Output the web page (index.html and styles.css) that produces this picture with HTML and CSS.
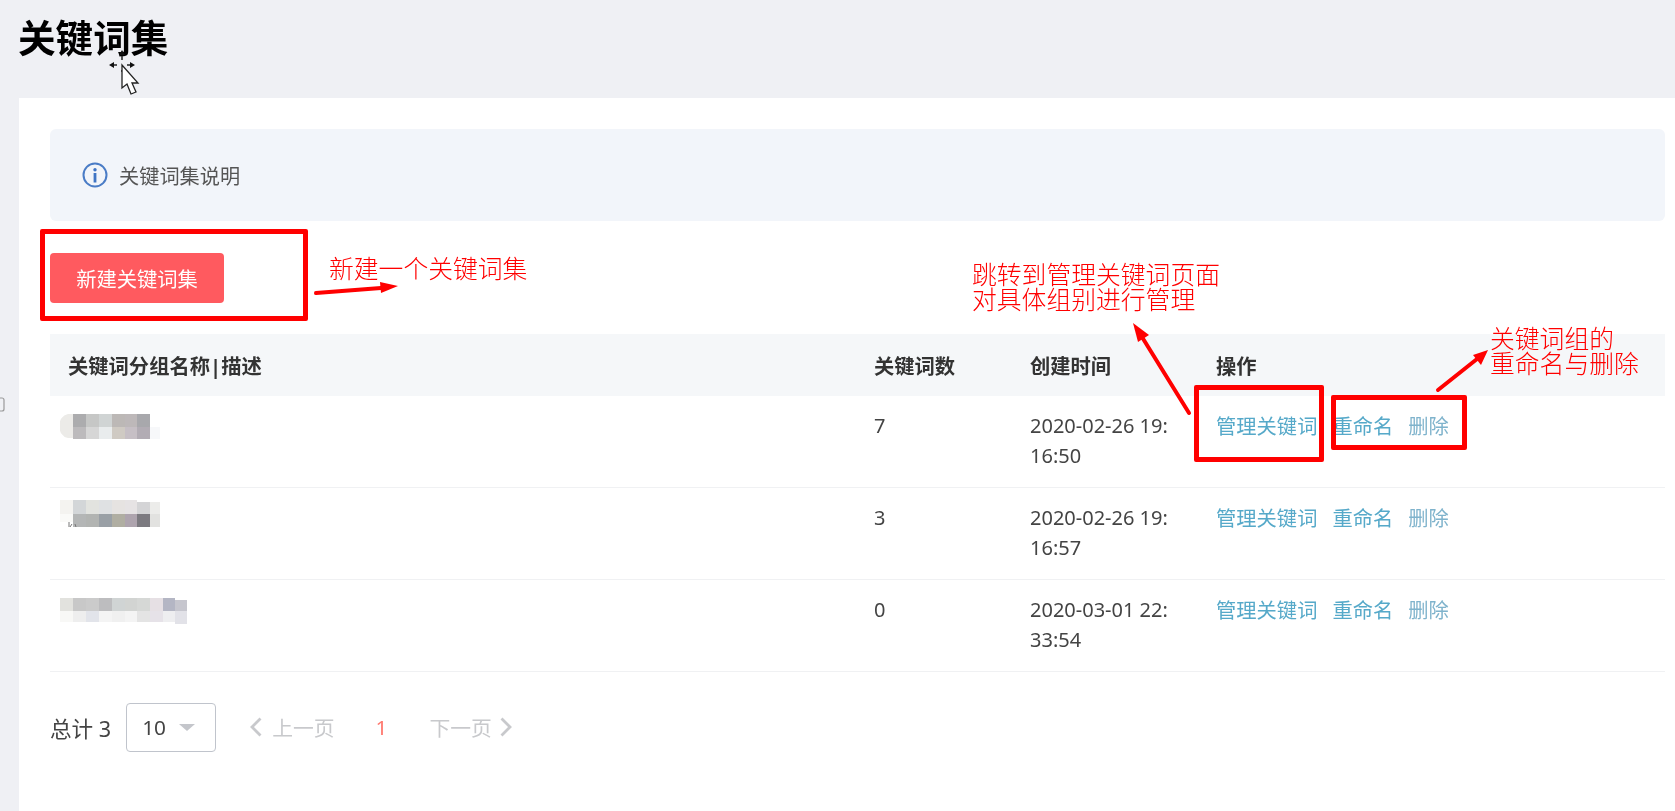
FILE: index.html
```html
<!DOCTYPE html>
<html lang="zh-CN">
  <head>
    <meta charset="UTF-8" />
    <title>关键词集</title>
    <link rel="stylesheet" href="styles.css">
  </head>
  <body>
    <header class="pageHead">
      <h1>关键词集</h1>
    </header>

    <main class="panel">
      <div class="notice">
        <svg class="noticeIcon" viewBox="0 0 26 26" width="26" height="26">
          <circle cx="13" cy="13" r="11.5" fill="none" stroke="#4a7cc6" stroke-width="2" />
          <circle cx="13" cy="7.8" r="1.7" fill="#3f74c4" />
          <rect x="11.6" y="11" width="2.8" height="9.5" fill="#3f74c4" />
        </svg>
        <span>关键词集说明</span>
      </div>

      <div class="toolbar">
        <button class="btnNew">新建关键词集</button>
      </div>

      <table class="groupTable">
        <thead>
          <tr>
            <th class="colName">关键词分组名称|描述</th>
            <th class="colCount">关键词数</th>
            <th class="colTime">创建时间</th>
            <th>操作</th>
          </tr>
        </thead>
        <tbody>
          <tr>
            <td>
              <svg class="mosaic" width="110" height="26" viewBox="0 0 110 26">
                <path d="M8 0h7v24H8a10 10 0 0 1-8-12 10 10 0 0 1 8-12z" fill="#ecebe8" />
                <rect x="13" y="0" width="13" height="13" fill="#acacae" />
                <rect x="26" y="0" width="13" height="13" fill="#c6c7c6" />
                <rect x="39" y="0" width="13" height="13" fill="#d0d4d4" />
                <rect x="52" y="0" width="13" height="13" fill="#bcb8b6" />
                <rect x="65" y="0" width="12" height="13" fill="#bdb8b9" />
                <rect x="77" y="0" width="13" height="13" fill="#a8a8ac" />
                <rect x="13" y="13" width="13" height="12" fill="#bcbabc" />
                <rect x="26" y="13" width="13" height="12" fill="#d6d6d6" />
                <rect x="39" y="13" width="13" height="12" fill="#e9eced" />
                <rect x="52" y="13" width="13" height="12" fill="#cfcac3" />
                <rect x="65" y="13" width="12" height="12" fill="#c6bfc5" />
                <rect x="77" y="13" width="13" height="12" fill="#b2acb4" />
                <rect x="90" y="13" width="10" height="12" fill="#f7f8fa" />
              </svg>
            </td>
            <td>7</td>
            <td>2020-02-26 19:<br>16:50</td>
            <td>
              <div class="actions">
                <a>管理关键词</a>
                <a>重命名</a>
                <a class="light">删除</a>
              </div>
            </td>
          </tr>
          <tr>
            <td>
              <svg class="mosaic mosaicUp" width="110" height="30" viewBox="0 0 110 30">
                <rect x="0" y="0" width="13" height="14" fill="#f4f3f0" />
                <rect x="13" y="0" width="13" height="14" fill="#d3d6d8" />
                <rect x="26" y="0" width="13" height="14" fill="#e2e3df" />
                <rect x="39" y="0" width="13" height="14" fill="#dfe1e3" />
                <rect x="52" y="0" width="13" height="14" fill="#e6e3e1" />
                <rect x="65" y="0" width="12" height="14" fill="#e6e3e4" />
                <rect x="77" y="2" width="13" height="12" fill="#d4d4d6" />
                <rect x="90" y="2" width="10" height="12" fill="#ececea" />
                <rect x="0" y="14" width="13" height="8" fill="#fafaf8" />
                <rect x="13" y="14" width="13" height="13" fill="#b4b6b6" />
                <rect x="26" y="14" width="13" height="13" fill="#b2b4b2" />
                <rect x="39" y="14" width="13" height="13" fill="#9aa0a6" />
                <rect x="52" y="14" width="13" height="13" fill="#b0aea2" />
                <rect x="65" y="14" width="12" height="13" fill="#aea4ae" />
                <rect x="77" y="14" width="13" height="13" fill="#7c7a80" />
                <rect x="90" y="14" width="10" height="13" fill="#e2e2e0" />
                <path d="M9 22v5M12 24l-2 3M15 24l1 3" stroke="#777" stroke-width="1" fill="none" />
              </svg>
            </td>
            <td>3</td>
            <td>2020-02-26 19:<br>16:57</td>
            <td>
              <div class="actions">
                <a>管理关键词</a>
                <a>重命名</a>
                <a class="light">删除</a>
              </div>
            </td>
          </tr>
          <tr>
            <td>
              <svg class="mosaic" width="130" height="26" viewBox="0 0 130 26">
                <rect x="0" y="0" width="13" height="13" fill="#e2e2de" />
                <rect x="13" y="0" width="13" height="13" fill="#c8c8c8" />
                <rect x="26" y="0" width="13" height="13" fill="#cbcbcb" />
                <rect x="39" y="0" width="13" height="13" fill="#bdbdbf" />
                <rect x="52" y="0" width="13" height="13" fill="#d0d4d4" />
                <rect x="65" y="0" width="12" height="13" fill="#d2d4d2" />
                <rect x="77" y="0" width="13" height="13" fill="#d6d8d6" />
                <rect x="90" y="0" width="13" height="13" fill="#e6e0e4" />
                <rect x="103" y="0" width="12" height="13" fill="#b4b6c4" />
                <rect x="115" y="2" width="12" height="11" fill="#c6c6ce" />
                <rect x="0" y="13" width="13" height="11" fill="#f8f8f6" />
                <rect x="13" y="13" width="13" height="11" fill="#eeeeee" />
                <rect x="26" y="13" width="13" height="11" fill="#e2e4ea" />
                <rect x="39" y="13" width="13" height="11" fill="#f4f4f4" />
                <rect x="52" y="13" width="13" height="11" fill="#f0f0f0" />
                <rect x="65" y="13" width="12" height="11" fill="#f4f4f4" />
                <rect x="77" y="13" width="13" height="11" fill="#e4e4e4" />
                <rect x="90" y="13" width="13" height="11" fill="#e6e2e8" />
                <rect x="103" y="13" width="12" height="11" fill="#eeeef0" />
                <rect x="115" y="13" width="12" height="13" fill="#e2e2e8" />
              </svg>
            </td>
            <td>0</td>
            <td>2020-03-01 22:<br>33:54</td>
            <td>
              <div class="actions">
                <a>管理关键词</a>
                <a>重命名</a>
                <a class="light">删除</a>
              </div>
            </td>
          </tr>
        </tbody>
      </table>

      <div class="pager">
        <span class="total">总计 3</span>
        <div class="pageSize">
          <span>10</span>
          <i class="caret"></i>
        </div>
        <a class="pageLink prev">
          <svg viewBox="0 0 12 20" width="12" height="20"><path d="M10.5 1.5 2 10l8.5 8.5" fill="none" stroke="#c8c9cc" stroke-width="2.8" /></svg>
          上一页
        </a>
        <span class="pageNum">1</span>
        <a class="pageLink next">
          下一页
          <svg viewBox="0 0 12 20" width="12" height="20"><path d="M1.5 1.5 10 10l-8.5 8.5" fill="none" stroke="#c8c9cc" stroke-width="2.8" /></svg>
        </a>
      </div>
    </main>

    <!-- red review marks on top of the page -->
    <div class="redBox boxNew"></div>
    <div class="redBox boxManage"></div>
    <div class="redBox boxRename"></div>

    <p class="note noteNew">新建一个关键词集</p>
    <p class="note noteManage">跳转到管理关键词页面<br>对具体组别进行管理</p>
    <p class="note noteRename">关键词组的<br>重命名与删除</p>

    <svg class="marks" width="1675" height="811" viewBox="0 0 1675 811">
      <path d="M316 293 381 288" stroke="#f00" stroke-width="4" stroke-linecap="round" />
      <path d="M380 282 398 286 381 293z" fill="#f00" />
      <path d="M1189 413 1142 337" stroke="#f00" stroke-width="4" stroke-linecap="round" />
      <path d="M1133 323 1149 335 1138 342z" fill="#f00" />
      <path d="M1438 390 1477 359" stroke="#f00" stroke-width="4" stroke-linecap="round" />
      <path d="M1488 350 1481 365 1473 355z" fill="#f00" />
      <!-- mouse pointer with the move arrows -->
      <path d="M122 56v4M122 70v2M112 65h5M127 65h5" stroke="#222" stroke-width="1.5" />
      <path d="M122 50l-3 5h6zM109 65l5-3v6zM135 65l-5-3v6z" fill="#111" />
      <path d="M122 65v23l5-4 4 10 5-2-4-9h6z" fill="#fff" stroke="#222" stroke-width="1.3" />
      <!-- cut off control at the left edge -->
      <path d="M0 398h2a2 2 0 0 1 2 2v9a2 2 0 0 1-2 2H0" fill="none" stroke="#999" stroke-width="1.2" />
    </svg>
  </body>
</html>
```

FILE: styles.css
```css
* {
  margin: 0;
  padding: 0;
  box-sizing: border-box;
}

html,
body {
  height: 100%;
}

body {
  display: flex;
  flex-direction: column;
  position: relative;
  overflow: hidden;
  background-color: #eff0f4;
  color: #444;
  font-family: "Noto Sans", "Noto Sans CJK SC", sans-serif;
  font-size: 20px;
  filter: blur(0.35px);
}

.pageHead {
  height: 98px;
  padding: 14px 0 0 18px;
}

.pageHead h1 {
  font-size: 37.6px;
  line-height: 48px;
  font-weight: 700;
  color: #000;
}

.panel {
  flex: 1;
  margin-left: 19px;
  padding: 31px 10px 0 31px;
  background-color: #fff;
}

.notice {
  display: flex;
  align-items: center;
  gap: 11px;
  height: 92px;
  padding-left: 32px;
  background-color: #f2f5fa;
  border-radius: 6px;
  color: #555;
  font-size: 20.2px;
}

.toolbar {
  padding: 32px 0 31px;
}

.btnNew {
  display: block;
  width: 174px;
  height: 50px;
  border: none;
  border-radius: 4px;
  background-color: #ff5a5f;
  color: #fff;
  font-family: inherit;
  font-size: 20.3px;
}

.groupTable {
  width: 100%;
  border-collapse: collapse;
  table-layout: fixed;
}

.groupTable th {
  height: 62px;
  padding-left: 18px;
  background-color: #f5f7f9;
  color: #333;
  font-size: 20.3px;
  font-weight: 700;
  text-align: left;
}

.colName {
  width: 806px;
}

.colCount {
  width: 156px;
}

.colTime {
  width: 186px;
}

.groupTable td {
  height: 92px;
  padding: 15px 0 16px 18px;
  border-bottom: 1px solid #f0f1f3;
  font-size: 20px;
  line-height: 30px;
  vertical-align: top;
  color: #444;
}

.groupTable tbody tr:first-child td {
  height: 91px;
  padding-bottom: 15px;
}

.mosaic {
  display: block;
  margin: 3px 0 0 -8px;
}

.mosaicUp {
  margin-top: -3px;
}

.actions {
  display: flex;
  gap: 15px;
}

.actions a {
  color: #56a9c9;
  font-size: 20.3px;
}

.actions a.light {
  color: #7fb3cc;
}

.pager {
  display: flex;
  align-items: center;
  margin-top: 31px;
  height: 49px;
  font-size: 20.8px;
}

.total {
  color: #444;
  font-size: 21.6px;
  margin-right: 15px;
}

.pageSize {
  display: flex;
  align-items: center;
  justify-content: space-between;
  width: 90px;
  height: 49px;
  padding: 0 20px 0 15px;
  border: 1px solid #c0c4cc;
  border-radius: 4px;
}

.caret {
  width: 0;
  height: 0;
  border-left: 8px solid transparent;
  border-right: 8px solid transparent;
  border-top: 7px solid #c4c6cb;
}

.pageLink {
  display: flex;
  align-items: center;
  gap: 10px;
  color: #c8c9cc;
}

.next {
  gap: 8px;
}

.prev {
  margin-left: 34px;
}

.pageNum {
  margin: 0 42px 0 41px;
  color: #ff7a70;
}

.marks {
  position: absolute;
  left: 0;
  top: 0;
  pointer-events: none;
}

.redBox {
  position: absolute;
  border: 5px solid #f00;
  border-radius: 2px;
}

.boxNew {
  left: 40px;
  top: 229px;
  width: 268px;
  height: 92px;
}

.boxManage {
  left: 1194px;
  top: 385px;
  width: 130px;
  height: 77px;
}

.boxRename {
  left: 1331px;
  top: 395px;
  width: 136px;
  height: 55px;
}

.note {
  position: absolute;
  color: #f00;
  font-family: "Noto Sans CJK SC", sans-serif;
  font-size: 24.8px;
  font-weight: 300;
  line-height: 25px;
  white-space: nowrap;
}

.noteNew {
  left: 329px;
  top: 255px;
}

.noteManage {
  left: 972px;
  top: 261px;
}

.noteRename {
  left: 1490px;
  top: 325px;
}
```
